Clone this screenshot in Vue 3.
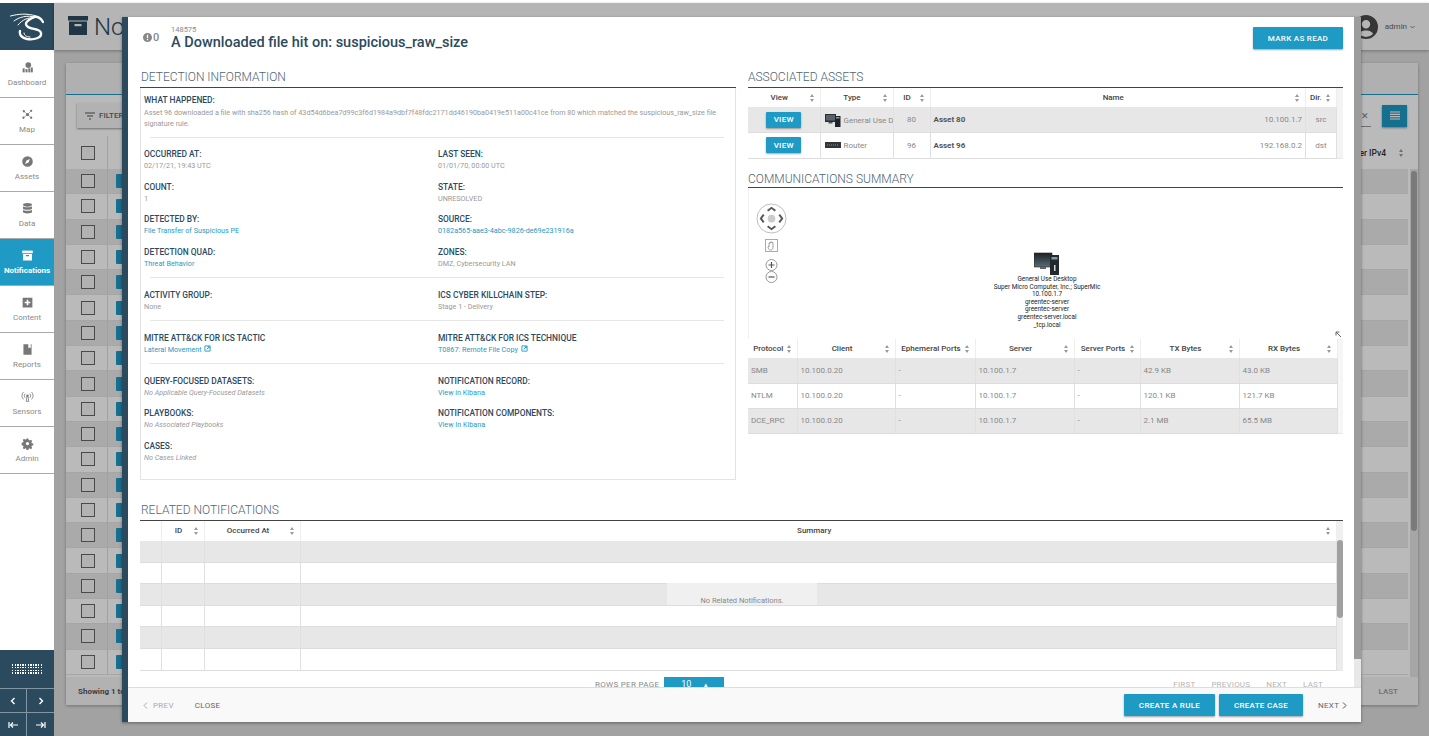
<script setup>
const navItems = [
  { label: 'Dashboard', icon: 'dashboard' },
  { label: 'Map', icon: 'map' },
  { label: 'Assets', icon: 'assets' },
  { label: 'Data', icon: 'data' },
  { label: 'Notifications', icon: 'notifications', active: true },
  { label: 'Content', icon: 'content' },
  { label: 'Reports', icon: 'reports' },
  { label: 'Sensors', icon: 'sensors' },
  { label: 'Admin', icon: 'admin' }
]
const bgRows = Array.from({ length: 20 }, (_, i) => i)

const groups = [
  [
    [
      { label: 'OCCURRED AT:', value: '02/17/21, 19:43 UTC' },
      { label: 'LAST SEEN:', value: '01/01/70, 00:00 UTC' }
    ],
    [
      { label: 'COUNT:', value: '1' },
      { label: 'STATE:', value: 'UNRESOLVED' }
    ],
    [
      { label: 'DETECTED BY:', value: 'File Transfer of Suspicious PE', link: true },
      { label: 'SOURCE:', value: '0182a565-aae3-4abc-9826-de69e231916a', link: true }
    ],
    [
      { label: 'DETECTION QUAD:', value: 'Threat Behavior', link: true },
      { label: 'ZONES:', value: 'DMZ, Cybersecurity LAN' }
    ]
  ],
  [
    [
      { label: 'ACTIVITY GROUP:', value: 'None' },
      { label: 'ICS CYBER KILLCHAIN STEP:', value: 'Stage 1 - Delivery' }
    ]
  ],
  [
    [
      { label: 'MITRE ATT&CK FOR ICS TACTIC', value: 'Lateral Movement', link: true, ext: true },
      { label: 'MITRE ATT&CK FOR ICS TECHNIQUE', value: 'T0867: Remote File Copy', link: true, ext: true }
    ]
  ],
  [
    [
      { label: 'QUERY-FOCUSED DATASETS:', value: 'No Applicable Query-Focused Datasets', empty: true },
      { label: 'NOTIFICATION RECORD:', value: 'View in Kibana', link: true }
    ],
    [
      { label: 'PLAYBOOKS:', value: 'No Associated Playbooks', empty: true },
      { label: 'NOTIFICATION COMPONENTS:', value: 'View In Kibana', link: true }
    ],
    [
      { label: 'CASES:', value: 'No Cases Linked', empty: true },
      null
    ]
  ]
]

const assets = [
  { type: 'General Use D', kind: 'desktop', id: 80, name: 'Asset 80', ip: '10.100.1.7', dir: 'src' },
  { type: 'Router', kind: 'router', id: 96, name: 'Asset 96', ip: '192.168.0.2', dir: 'dst' }
]

const commCols = [
  { label: 'Protocol', w: 49 },
  { label: 'Client', w: 98 },
  { label: 'Ephemeral Ports', w: 80 },
  { label: 'Server', w: 99 },
  { label: 'Server Ports', w: 66 },
  { label: 'TX Bytes', w: 99 },
  { label: 'RX Bytes', w: 98 }
]
const commRows = [
  ['SMB', '10.100.0.20', '-', '10.100.1.7', '-', '42.9 KB', '43.0 KB'],
  ['NTLM', '10.100.0.20', '-', '10.100.1.7', '-', '120.1 KB', '121.7 KB'],
  ['DCE_RPC', '10.100.0.20', '-', '10.100.1.7', '-', '2.1 MB', '65.5 MB']
]
const nodeLabels = [
  'General Use Desktop',
  'Super Micro Computer, Inc.; SuperMic',
  '10.100.1.7',
  'greentec-server',
  'greentec-server',
  'greentec-server.local',
  '_tcp.local'
]
const relatedRows = [0, 1, 2, 3, 4, 5]
</script>

<template>
  <div class="app">
    <aside class="sidebar">
      <div class="logo">
        <svg width="34" height="28" viewBox="0 0 34 28" fill="none" stroke="#fff" stroke-linecap="round" stroke-linejoin="round">
          <path d="M.5 3C8 1 17 0 26 3M4 8C9 4 17 2 25 4M8 12c4-5 10-8 16-7" stroke-width="1" />
          <path d="M33 9c-2-4-6-6-9-5-6 3-10 6-7 9 3 4 13 2 14 7 1 5-7 7-14 6-5-1-8-4-7-8" stroke-width="2.300" />
          <path d="M14 20c0 2 2 4 6 4" stroke-width="1" />
        </svg>
      </div>
      <nav class="nav">
        <a v-for="item in navItems" :key="item.label" class="nav-item" :class="{ active: item.active }">
          <svg class="nav-icon" viewBox="0 0 16 16" fill="currentColor">
            <template v-if="item.icon === 'dashboard'">
              <circle cx="9" cy="5" r="3.500" />
              <rect x="2" y="9" width="2.500" height="5" />
              <rect x="5.500" y="10" width="2.500" height="4" />
              <rect x="9" y="9" width="2.500" height="5" />
              <rect x="12.200" y="8" width="2.300" height="6" />
            </template>
            <template v-else-if="item.icon === 'map'">
              <circle cx="8" cy="8" r="2" />
              <circle cx="3.500" cy="4" r="1.400" />
              <circle cx="12.500" cy="3.500" r="1.400" />
              <circle cx="3" cy="12" r="1.400" />
              <circle cx="12.500" cy="12" r="1.400" />
              <path d="M3.500 4 8 8l4.500-4.500M3 12l5-4 4.500 4" stroke="currentColor" stroke-width=".7" fill="none" />
            </template>
            <template v-else-if="item.icon === 'assets'">
              <path fill-rule="evenodd" d="M8 1.500a6.500 6.500 0 1 1 0 13 6.500 6.500 0 0 1 0-13zM11 5 6.700 6.700 5 11l4.300-1.700z" />
            </template>
            <template v-else-if="item.icon === 'data'">
              <ellipse cx="8" cy="3.500" rx="5.500" ry="2.200" />
              <path d="M2.500 5.200c1 1.600 10 1.600 11 0v3c-1 1.600-10 1.600-11 0zM2.500 9.600c1 1.600 10 1.600 11 0v3c-1 1.900-10 1.900-11 0z" />
            </template>
            <template v-else-if="item.icon === 'notifications'">
              <rect x="1.500" y="2" width="13" height="3.200" />
              <path fill-rule="evenodd" d="M2.500 6h11v8h-11zM6 7.500V9h4V7.500z" />
            </template>
            <template v-else-if="item.icon === 'content'">
              <path fill-rule="evenodd" d="M2 2h12v12H2zM7 4.500V7H4.500v2H7v2.500h2V9h2.500V7H9V4.500z" />
            </template>
            <template v-else-if="item.icon === 'reports'">
              <path fill-rule="evenodd" d="M3 1.500h10v13H3zM9 1.500v5l1.500-1 1.500 1v-5z" />
            </template>
            <template v-else-if="item.icon === 'sensors'">
              <circle cx="8" cy="7" r="1.500" />
              <path d="M7.300 8h1.400l.8 6h-3zM5 9.500a4 4 0 0 1 0-5M11 4.500a4 4 0 0 1 0 5M3 11.500a7 7 0 0 1 0-9M13 2.500a7 7 0 0 1 0 9" stroke="currentColor" stroke-width="1" fill="none" />
            </template>
            <template v-else>
              <path fill-rule="evenodd" d="M6.800 1.500h2.400l.4 2 1.300.6 1.700-1.100 1.700 1.700-1.100 1.700.6 1.300 2 .4v2.400l-2 .4-.6 1.300 1.100 1.700-1.700 1.700-1.700-1.100-1.300.6-.4 2H6.800l-.4-2-1.300-.6-1.700 1.100-1.700-1.700 1.100-1.700-.6-1.300-2-.4V6.900l2-.4.6-1.300L1.700 3.500l1.700-1.700 1.700 1.100 1.300-.6zM8 6a2.200 2.200 0 1 0 0 4.400A2.200 2.200 0 0 0 8 6z" transform="translate(.6 .6) scale(.92)" />
            </template>
          </svg>
          <span>{{ item.label }}</span>
        </a>
      </nav>
      <div class="side-bottom">
        <div class="dots">
          <i v-for="n in 48" :key="n"></i>
        </div>
        <div class="side-arrows">
          <span>
            <svg width="8" height="8" viewBox="0 0 8 8"><path d="M5.500 1 2.500 4l3 3" fill="none" stroke="#fff" stroke-width="1.400" /></svg>
          </span>
          <span>
            <svg width="8" height="8" viewBox="0 0 8 8"><path d="M2.500 1l3 3-3 3" fill="none" stroke="#fff" stroke-width="1.400" /></svg>
          </span>
          <span>
            <svg width="11" height="8" viewBox="0 0 11 8"><path d="M1 1v6M10 4H2.500M5 1.500 2.500 4 5 6.500" fill="none" stroke="#fff" stroke-width="1.200" /></svg>
          </span>
          <span>
            <svg width="11" height="8" viewBox="0 0 11 8"><path d="M10 1v6M1 4h7.500M6 1.500 8.500 4 6 6.500" fill="none" stroke="#fff" stroke-width="1.200" /></svg>
          </span>
        </div>
      </div>
    </aside>

    <main class="main">
      <header class="top">
        <svg class="top-icon" viewBox="0 0 20 20" fill="#2c4a5e">
          <rect x="0" y="1" width="20" height="4.500" />
          <path fill-rule="evenodd" d="M1 6.500h18V20H1zM6.500 9v2.200h7V9z" />
        </svg>
        <h1>Notifications</h1>
        <div class="user">
          <svg class="avatar" viewBox="0 0 24 24">
            <path fill="#4b4b4b" fill-rule="evenodd" d="M12 0a12 12 0 1 1 0 24 12 12 0 0 1 0-24zm0 5a4.200 4.200 0 1 0 0 8.400A4.200 4.200 0 0 0 12 5zm0 10.500c-3.500 0-6.500 1.500-7 3.500a9.500 9.500 0 0 0 14 0c-.5-2-3.500-3.500-7-3.500z" />
          </svg>
          <span>admin</span>
          <svg class="caret" width="5" height="4" viewBox="0 0 5 4"><path d="M.5 1 2.500 3l2-2" fill="none" stroke="#666" stroke-width=".8" /></svg>
        </div>
      </header>
      <section class="card">
        <div class="tabs"><div class="tab"></div></div>
        <div class="toolbar">
          <button class="filter">
            <svg width="10" height="8" viewBox="0 0 10 8"><path d="M0 1h10M2 4h6M4 7h2" stroke="#555" stroke-width="1" /></svg>
            FILTER
          </button>
          <span class="clear">✕</span>
          <button class="menu">
            <svg width="10" height="9" viewBox="0 0 10 9"><path d="M0 1h10M0 3.300h10M0 5.600h10M0 8h10" stroke="#fff" stroke-width="1.200" /></svg>
          </button>
        </div>
        <div class="bg-table">
          <div class="bg-scroll"><div class="bg-thumb"></div></div>
          <div class="bg-head">
            <div class="bg-check"><b></b></div>
            <div class="bg-end">Sender IPv4 <i class="sort"></i></div>
          </div>
          <div v-for="r in bgRows" :key="r" class="bg-row">
            <div class="bg-check"><b></b></div>
            <div class="bg-view">VIEW</div>
          </div>
        </div>
        <div class="bg-foot">
          <span>Showing 1 to</span>
          <span class="bg-last">LAST</span>
        </div>
      </section>
      <div class="backdrop"></div>
    </main>

    <div class="modal">
      <div class="modal-body">
        <div class="modal-scroll"><div class="modal-thumb"></div></div>
        <div class="modal-head">
          <div class="count">
            <svg width="9" height="9" viewBox="0 0 10 10"><path fill="#888" fill-rule="evenodd" d="M5 0a5 5 0 1 1 0 10A5 5 0 0 1 5 0zM4.300 2v3.800h1.400V2zm0 4.700V8h1.400V6.700z" /></svg>
            <span>0</span>
          </div>
          <div class="head-text">
            <small>148575</small>
            <h2>A Downloaded file hit on: suspicious_raw_size</h2>
          </div>
          <button class="btn mark">MARK AS READ</button>
        </div>

        <div class="columns">
          <section class="col">
            <h3 class="section-title">DETECTION INFORMATION</h3>
            <div class="info-box">
              <div class="label">WHAT HAPPENED:</div>
              <p class="value long">Asset 96 downloaded a file with sha256 hash of 43d54d6bea7d99c3f6d1984a9dbf7f48fdc2171dd46190ba0419e511a00c41ce from 80 which matched the suspicious_raw_size file signature rule.</p>
              <template v-for="(group, g) in groups" :key="g">
                <hr class="divider" :class="{ first: g === 0 }" />
                <div v-for="(row, r) in group" :key="r" class="field-row">
                  <div v-for="(f, i) in row" :key="i" class="field">
                    <template v-if="f">
                      <div class="label">{{ f.label }}</div>
                      <div class="value" :class="{ link: f.link, empty: f.empty }">
                        {{ f.value }}
                        <svg v-if="f.ext" class="ext" viewBox="0 0 8 8"><path d="M1 1h6v6H1zM3 5l3-3M4 2h2v2" fill="none" stroke="#1e9ac4" stroke-width="1" /></svg>
                      </div>
                    </template>
                  </div>
                </div>
              </template>
            </div>
          </section>

          <section class="col">
            <h3 class="section-title">ASSOCIATED ASSETS</h3>
            <div class="table-wrap assets-wrap">
              <table class="grid assets">
                <colgroup><col style="width:72px" /><col style="width:73px" /><col style="width:37px" /><col /><col style="width:31px" /></colgroup>
                <thead>
                  <tr>
                    <th>View<i class="sort"></i></th>
                    <th>Type<i class="sort"></i></th>
                    <th>ID<i class="sort"></i></th>
                    <th>Name<i class="sort"></i></th>
                    <th class="dir">Dir.<i class="sort"></i></th>
                  </tr>
                </thead>
                <tbody>
                  <tr v-for="a in assets" :key="a.id">
                    <td class="center"><button class="btn view">VIEW</button></td>
                    <td class="type">
                      <svg v-if="a.kind === 'desktop'" width="16" height="14" viewBox="0 0 16 14">
                        <rect x="0" y="1" width="11" height="8" fill="#2a2f35" />
                        <rect x="1" y="2" width="9" height="5.500" fill="#56616b" />
                        <rect x="3.500" y="9" width="4" height="1.500" fill="#555" />
                        <rect x="10" y="3" width="5.500" height="11" fill="#1e2328" />
                        <rect x="11" y="4" width="3.500" height="1.500" fill="#7d98a8" />
                      </svg>
                      <svg v-else width="16" height="14" viewBox="0 0 16 14">
                        <rect x="0" y="4" width="16" height="6" fill="#31363b" />
                        <path d="M2 7h12" stroke="#8b9298" stroke-width="1" stroke-dasharray="1 1" />
                      </svg>
                      <span>{{ a.type }}</span>
                    </td>
                    <td class="center">{{ a.id }}</td>
                    <td class="name"><b>{{ a.name }}</b><span>{{ a.ip }}</span></td>
                    <td class="center">{{ a.dir }}</td>
                  </tr>
                </tbody>
              </table>
            </div>

            <h3 class="section-title comm-title">COMMUNICATIONS SUMMARY</h3>
            <div class="graph">
              <div class="graph-tools">
                <svg width="31" height="31" viewBox="0 0 32 32">
                  <circle cx="16" cy="16" r="15" fill="#fff" stroke="#bbb" />
                  <circle cx="16" cy="16" r="4" fill="#ccc" />
                  <path d="M12 8l4-3 4 3M12 24l4 3 4-3M8 12l-3 4 3 4M24 12l3 4-3 4" fill="none" stroke="#555" stroke-width="2" />
                </svg>
                <svg class="hand" width="13" height="13" viewBox="0 0 13 13">
                  <rect x=".5" y=".5" width="12" height="12" fill="#fff" stroke="#aaa" />
                  <path d="M4 7V4.500c0-.8 1-.8 1 0V3.500c0-.8 1-.8 1 0 0-.8 1-.8 1 0v.5c0-.8 1-.8 1 0V8c0 2-1 3-2.500 3S4 10.500 3 8.500c-.4-.8.500-1.200 1-.5z" fill="none" stroke="#777" stroke-width=".7" />
                </svg>
                <svg class="zoom-ctl" width="13" height="24" viewBox="0 0 13 24">
                  <circle cx="6.500" cy="6" r="5.500" fill="#fff" stroke="#999" />
                  <path d="M3.500 6h6M6.500 3v6" stroke="#555" stroke-width="1.200" />
                  <circle cx="6.500" cy="18" r="5.500" fill="#fff" stroke="#999" />
                  <path d="M3.500 18h6" stroke="#555" stroke-width="1.200" />
                </svg>
              </div>
              <div class="node">
                <svg width="26" height="23" viewBox="0 0 26 23">
                  <defs>
                    <linearGradient id="scr" x1="0" y1="0" x2="0" y2="1">
                      <stop offset="0" stop-color="#1c2126" />
                      <stop offset="1" stop-color="#5d6a74" />
                    </linearGradient>
                  </defs>
                  <rect x="0" y="1" width="18" height="14" fill="url(#scr)" stroke="#222" stroke-width=".6" />
                  <rect x="6" y="15" width="6" height="2" fill="#666" />
                  <rect x="16" y="3" width="9" height="20" fill="#23282d" />
                  <rect x="17.500" y="5" width="6" height="2.500" fill="#7d98a8" />
                  <rect x="20" y="13" width="1.500" height="6" fill="#cfd6da" />
                </svg>
                <div v-for="(t, i) in nodeLabels" :key="i" class="node-label">{{ t }}</div>
              </div>
              <span class="resize">
                <svg width="7" height="7" viewBox="0 0 7 7"><path d="M1 1h3.500M1 1v3.500M1 1l5 5" fill="none" stroke="#666" stroke-width="1" /></svg>
              </span>
            </div>
            <div class="table-wrap comm-wrap">
              <table class="grid comm">
                <colgroup><col v-for="c in commCols" :key="c.label" :style="{ width: c.w + 'px' }" /></colgroup>
                <thead>
                  <tr><th v-for="c in commCols" :key="c.label">{{ c.label }}<i class="sort"></i></th></tr>
                </thead>
                <tbody>
                  <tr v-for="(row, r) in commRows" :key="r">
                    <td v-for="(v, i) in row" :key="i">{{ v }}</td>
                  </tr>
                </tbody>
              </table>
            </div>
          </section>
        </div>

        <section class="related">
          <h3 class="section-title">RELATED NOTIFICATIONS</h3>
          <div class="table-wrap related-wrap">
            <div class="rel-scroll"><div class="rel-thumb"></div></div>
            <table class="grid rel">
              <colgroup><col style="width:21px" /><col style="width:43px" /><col style="width:96px" /><col /></colgroup>
              <thead>
                <tr>
                  <th></th>
                  <th>ID<i class="sort"></i></th>
                  <th>Occurred At<i class="sort"></i></th>
                  <th>Summary<i class="sort"></i></th>
                </tr>
              </thead>
              <tbody>
                <tr v-for="r in relatedRows" :key="r"><td></td><td></td><td></td><td></td></tr>
              </tbody>
            </table>
            <div class="no-data">No Related Notifications.</div>
          </div>
          <div class="pager">
            <span class="rows-label">ROWS PER PAGE</span>
            <span class="rows-select">10 <em>▴</em></span>
            <span class="pages"><span>FIRST</span><span>PREVIOUS</span><span>NEXT</span><span>LAST</span></span>
          </div>
        </section>
      </div>

      <footer class="modal-foot">
        <span class="prev">
          <svg width="5" height="7" viewBox="0 0 5 7"><path d="M4 .5 1 3.500l3 3" fill="none" stroke="#aaa" stroke-width="1" /></svg>
          PREV
        </span>
        <span class="close">CLOSE</span>
        <span class="foot-gap"></span>
        <button class="btn foot-btn rule">CREATE A RULE</button>
        <button class="btn foot-btn case">CREATE CASE</button>
        <span class="next">
          NEXT
          <svg width="5" height="7" viewBox="0 0 5 7"><path d="M1 .5l3 3-3 3" fill="none" stroke="#555" stroke-width="1" /></svg>
        </span>
      </footer>
    </div>
  </div>
</template>

<style>
html, body { margin: 0; background: #fff; overflow: hidden; }
</style>

<style scoped>
* { box-sizing: border-box; }
.app { position: relative; display: flex; width: 1429px; height: 736px; padding-top: 3px; overflow: hidden; font-family: Roboto, "Liberation Sans", sans-serif; color: #333; }

.sidebar { width: 54px; flex: none; display: flex; flex-direction: column; background: #fff; }
.logo { height: 47px; background: #2c4a5e; display: flex; align-items: center; justify-content: center; }
.nav { display: flex; flex-direction: column; padding-top: 1px; }
.nav-item { height: 47px; display: flex; flex-direction: column; align-items: center; justify-content: center; gap: 4px; border-bottom: 1px solid #aaa; color: #8a8a8a; font-size: 8px; }
.nav-item.active { background: #1e9ac4; color: #fff; font-weight: 700; }
.nav-icon { width: 13px; height: 13px; color: #777; }
.active .nav-icon { color: #fff; }
.side-bottom { margin-top: auto; height: 86px; background: #2c4a5e; display: flex; flex-direction: column; }
.dots { height: 38px; display: grid; grid-template-columns: repeat(12, 1.500px); gap: 1.100px; align-content: center; justify-content: center; }
.dots i { width: 1.500px; height: 1.500px; background: #fff; }
.side-arrows { flex: 1; display: grid; grid-template-columns: 1fr 1fr; grid-template-rows: 1fr 1fr; }
.side-arrows span { display: flex; align-items: center; justify-content: center; border-top: 1px solid #8296a3; }
.side-arrows span:nth-child(odd) { border-right: 1px solid #8296a3; }

.main { position: relative; flex: 1; background: #dfdfdf; display: flex; flex-direction: column; min-width: 0; }
.top { height: 47px; flex: none; background: #f8f8f8; box-shadow: 0 1px 3px rgba(0,0,0,.3); display: flex; align-items: center; padding-left: 14px; }
.top-icon { width: 20px; height: 20px; margin-bottom: 3px; }
.top h1 { margin: 0 0 0 6px; font-size: 24px; font-weight: 300; color: #2c4a5e; }
.user { margin-left: auto; display: flex; align-items: center; font-size: 8px; color: #666; padding-right: 14px; }
.avatar { width: 24px; height: 24px; margin-right: 7px; }
.caret { margin-left: 3px; }
.card { margin: 13px 11px 0 12px; height: 642px; background: #fff; box-shadow: 0 1px 3px rgba(0,0,0,.3); display: flex; flex-direction: column; }
.tabs { height: 32px; flex: none; background: #f2f2f2; border-bottom: 1px solid #1e9ac4; }
.toolbar { height: 41px; flex: none; display: flex; align-items: center; padding: 0 11px 0 11px; background: #fff; }
.filter { width: 60px; height: 25px; border: 0; background: #f5f5f5; box-shadow: 0 1px 2px rgba(0,0,0,.4); display: flex; align-items: center; gap: 4px; padding: 0 8px; font: 500 8px Roboto, sans-serif; color: #666; }
.clear { margin-left: auto; margin-top: 3px; height: 19px; padding: 3px 2px 0 5px; font-size: 9px; color: #777; margin-right: 11px; border-bottom: 1px solid #999; }
.menu { width: 25px; height: 22px; border: 0; background: #1e9ac4; display: flex; align-items: center; justify-content: center; box-shadow: 0 1px 2px rgba(0,0,0,.4); }
.bg-table { position: relative; flex: 1; }
.bg-scroll { position: absolute; top: 33px; right: 0; width: 8px; bottom: 0; background: #e4e4e4; }
.bg-thumb { position: absolute; top: 2px; left: 1px; width: 6px; height: 360px; background: #a8a8a8; border-radius: 3px; }
.bg-head { height: 33px; background: #fff; display: flex; align-items: center; justify-content: space-between; font-size: 8px; font-weight: 500; padding-right: 8px; }
.bg-end { position: relative; padding-right: 24px; font-size: 8.500px; }
.bg-check { width: 42px; height: 100%; padding-left: 2px; display: flex; align-items: center; justify-content: center; border-right: 1px solid #ddd; }
.bg-check b { width: 14px; height: 14px; border: 1.500px solid #666; background: #f4f4f4; }
.bg-row { height: 25.300px; margin-right: 10px; display: flex; align-items: center; background: #fff; border-bottom: 1px solid #e4e4e4; }
.bg-row:nth-child(odd) { background: #eaeaea; }
.bg-view { margin-left: 8px; width: 30px; height: 14px; background: #1e9ac4; color: #fff; font-size: 7px; padding: 3px 8px; border-radius: 1px; }
.bg-foot { height: 28px; flex: none; display: flex; align-items: center; justify-content: space-between; padding: 0 20px 0 12px; background: #f5f5f5; font-size: 8px; font-weight: 700; color: #555; }
.bg-last { font-weight: 500; color: #999; }
.backdrop { position: absolute; inset: 0; background: rgba(0,0,0,.27); }

.modal { position: absolute; left: 122px; top: 17px; width: 1239px; height: 705px; display: flex; flex-direction: column; border-left: 6px solid #2c4a5e; background: #fff; box-shadow: 0 1px 3px rgba(0,0,0,.4); }
.modal-body { position: relative; flex: 1; min-height: 0; overflow: hidden; padding: 0 18px 0 12px; }
.modal-scroll { position: absolute; top: 0; right: 0; bottom: 0; width: 7px; background: #e8e8e8; }
.modal-thumb { height: 642px; background: #9c9c9c; }
.modal-head { height: 55px; display: flex; align-items: flex-start; padding-top: 9px; }
.count { width: 31px; margin-top: 5px; padding-left: 3px; display: flex; align-items: center; gap: 1px; font-size: 11px; font-weight: 500; color: #888; }
.head-text small { display: block; font-size: 7.500px; line-height: 8px; color: #888; }
.head-text h2 { margin: 0; font-size: 14.500px; line-height: 17px; font-weight: 500; color: #2c4a5e; white-space: nowrap; }
.btn { border: 0; background: #1e9ac4; color: #fff; font: 500 8px Roboto, sans-serif; letter-spacing: .3px; border-radius: 1px; box-shadow: 0 1px 2px rgba(0,0,0,.35); }
.mark { width: 90px; height: 22px; margin: 1px 0 0 auto; }

.columns { display: grid; grid-template-columns: 596px 595px; column-gap: 12px; }
.section-title { margin: 0; height: 16px; line-height: 10px; font-size: 12px; font-weight: 300; color: #4d6575; border-bottom: 1px solid #444; white-space: nowrap; padding-left: 1px; }
.col + .col .section-title { padding-left: 0; }
.info-box { height: 392px; border: 1px solid #e3e3e3; border-top: 0; padding: 6px 3px 0 3px; }
.divider { margin: 7px 8px 11px 6px; border: 0; border-top: 1px solid #e6e6e6; }
.divider.first { margin-top: 8px; margin-bottom: 10px; }
.field-row { display: grid; grid-template-columns: 294px 1fr; }
.field-row + .field-row { margin-top: 8.600px; }
.label { font-size: 8.400px; line-height: 12px; font-weight: 500; color: #2c4a5e; white-space: nowrap; }
.value { font-size: 7.200px; line-height: 12px; color: #999; white-space: nowrap; }
.value.long { margin: 0; line-height: 11px; white-space: normal; padding-top: 1px; }
.value.link { color: #1e9ac4; }
.value.empty { font-style: italic; }
.ext { width: 7px; height: 7px; margin-left: 1px; }

.table-wrap { position: relative; border-bottom: 1px solid #e8e8e8; }
.grid { width: 100%; border-collapse: collapse; table-layout: fixed; font-size: 8px; }
.grid th { position: relative; font-weight: 500; color: #444; text-align: center; background: #fff; border-right: 1px solid #eee; padding: 0; white-space: nowrap; }
.grid td { color: #888; background: #fff; border-right: 1px solid #e0e0e0; padding: 0; overflow: hidden; white-space: nowrap; }
.grid tbody tr:nth-child(odd) td { background: #e7e7e7; }
.grid tbody td { border-bottom: 1px solid #ddd; }
.sort { position: absolute; right: 5px; top: 50%; margin-top: -4px; width: 5px; height: 8px; }
.sort::before, .sort::after { content: ""; position: absolute; left: 0; border-left: 2.500px solid transparent; border-right: 2.500px solid transparent; }
.sort::before { top: 0; border-bottom: 3px solid #999; }
.sort::after { bottom: 0; border-top: 3px solid #999; }
.bg-end .sort { right: 6px; }

.assets-wrap { height: 71px; padding-right: 6px; background: #f4f4f4; }
.assets th { height: 19px; padding-right: 9px; }
.assets th.dir { text-align: left; padding: 0 0 0 4px; }
.assets td { height: 25.500px; }
.center { text-align: center; }
.view { width: 35px; height: 16px; padding: 0; vertical-align: middle; }
.type { padding-left: 4px !important; }
.type svg { vertical-align: middle; margin-right: 3px; }
.type span { vertical-align: middle; }
.name b { font-weight: 700; color: #555; margin-left: 3px; }
.name span { float: right; margin-right: 3px; }

.comm-title { margin-top: 15px; height: 14px; }
.graph { position: relative; height: 151px; border-left: 1px solid #f0f0f0; }
.graph-tools { position: absolute; left: 7px; top: 15px; display: flex; flex-direction: column; align-items: center; width: 31px; }
.hand { margin-top: 5px; }
.zoom-ctl { margin-top: 7px; }
.node { position: absolute; left: 223px; top: 64px; width: 150px; text-align: center; display: flex; flex-direction: column; align-items: center; }
.node svg { margin-bottom: 1px; }
.node-label { font-size: 6.400px; line-height: 7.600px; color: #222; white-space: nowrap; }
.resize { position: absolute; right: 1px; bottom: 1px; line-height: 0; }
.comm-wrap { height: 95px; padding-right: 6px; background: #f6f6f6; }
.comm th { height: 19px; padding-right: 8px; }
.comm td { height: 25px; padding-left: 3px; }

.related { margin-top: 25px; }
.related-wrap { height: 150px; padding-right: 6px; background: #f0f0f0; }
.rel-scroll { position: absolute; top: 19px; right: 0; bottom: 0; width: 6px; background: #ececec; }
.rel-thumb { height: 78px; background: #a0a0a0; border-radius: 3px; }
.rel th { height: 19.500px; padding-right: 8px; }
.rel td { height: 21.600px; }
.no-data { position: absolute; left: 527px; top: 62px; width: 150px; height: 22px; background: #f0f0f0; text-align: center; font-size: 7.500px; line-height: 11px; padding-top: 12px; color: #888; }
.pager { position: relative; height: 30px; display: flex; font-size: 8px; color: #888; padding-top: 6px; }
.rows-label { margin-left: 455px; letter-spacing: .3px; padding-top: 3px; }
.rows-select { margin-left: 5px; width: 60px; height: 20px; background: #1e9ac4; color: #fff; text-align: center; line-height: 15px; font-size: 9px; }
.rows-select em { font-style: normal; font-size: 7px; margin-left: 10px; }
.pages { position: absolute; right: 20px; top: 9px; display: flex; gap: 16px; color: #b5b5b5; letter-spacing: .2px; }

.modal-foot { height: 35px; flex: none; display: flex; align-items: center; background: #f9f9f9; border-top: 1px solid #ddd; font-size: 8px; letter-spacing: .3px; position: relative; padding-left: 15px; }
.prev { color: #aaa; display: flex; align-items: center; gap: 5px; }
.close { margin-left: 21px; color: #666; }
.foot-gap { flex: 1; }
.foot-btn { height: 22px; }
.rule { width: 91px; }
.case { width: 84px; margin-left: 4px; }
.next { width: 29px; margin: 0 14px 0 15px; color: #666; display: flex; align-items: center; justify-content: space-between; }
</style>
